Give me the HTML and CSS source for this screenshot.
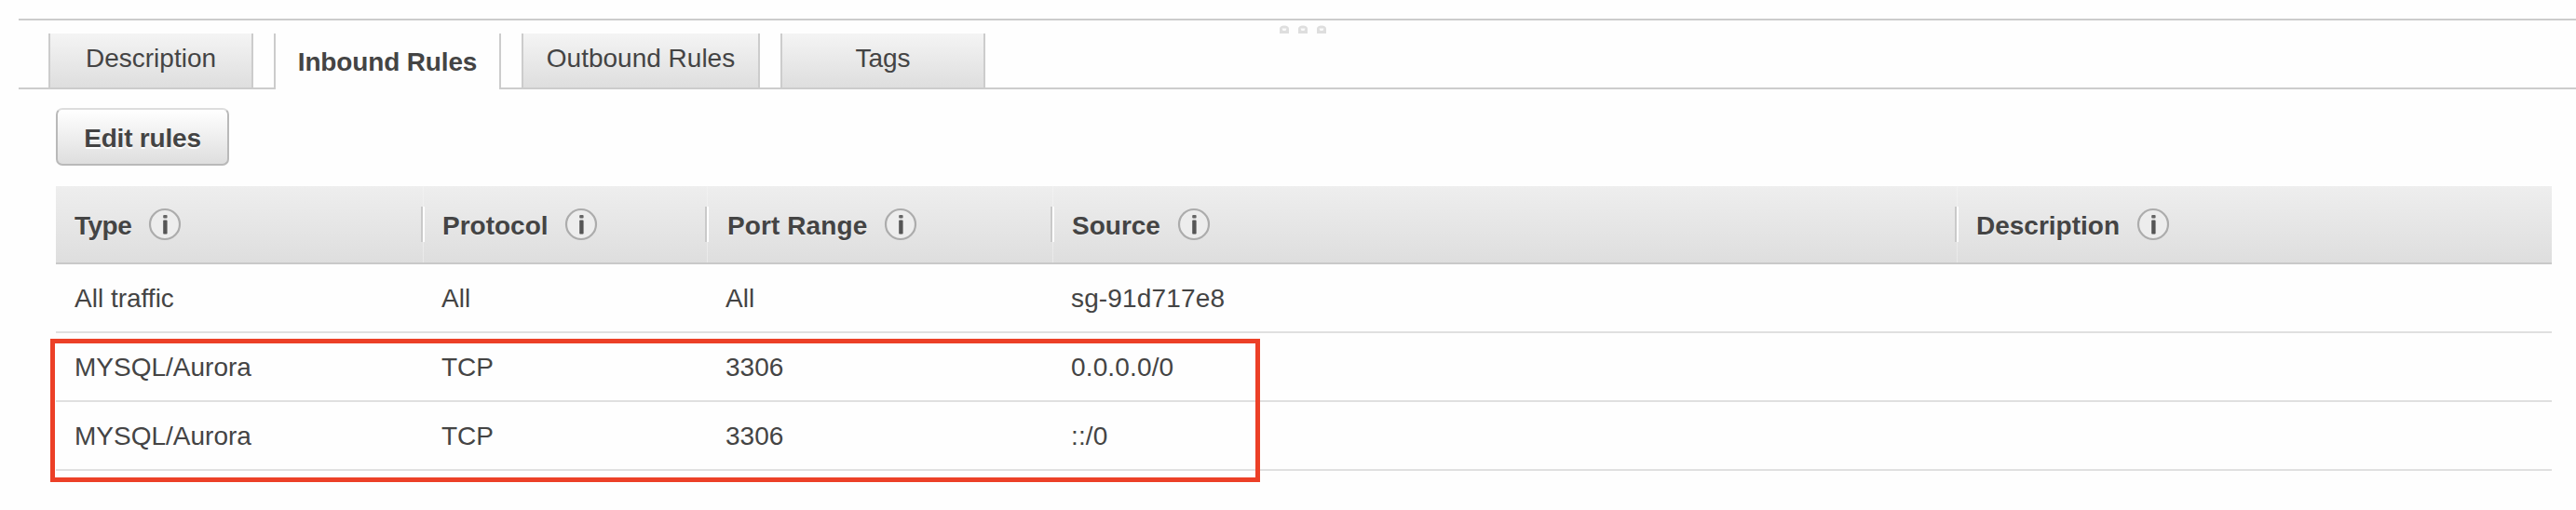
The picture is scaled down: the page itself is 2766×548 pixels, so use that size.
FILE: index.html
```html
<!DOCTYPE html>
<html lang="en">
<head>
<meta charset="utf-8">
<title>Security group rules</title>
<link rel="stylesheet" href="styles.css">
</head>
<body>
<svg class="defs" width="0" height="0" aria-hidden="true">
  <symbol id="info" viewBox="0 0 36 36">
    <circle cx="18" cy="18" r="16" fill="#ededed" stroke="#acacac" stroke-width="2.2"/>
    <rect x="16.2" y="8" width="4.4" height="3.4" rx="1" fill="#666"/>
    <rect x="16.2" y="13.6" width="4.4" height="15" rx="0.8" fill="#555"/>
  </symbol>
  <symbol id="grip" viewBox="0 0 10 9">
    <path d="M0 9V4Q0 0.5 5 0.5T10 4V9Z" fill="#dedede"/>
    <path d="M2.5 3.5H7.5L6.5 6H3.5Z" fill="#fafafa"/>
  </symbol>
</svg>
<main class="panel">
  <div class="splitter">
    <svg class="grip"><use href="#grip"/></svg>
    <svg class="grip"><use href="#grip"/></svg>
    <svg class="grip"><use href="#grip"/></svg>
  </div>
  <nav class="tabs">
    <a class="tab tab-description">Description</a>
    <a class="tab tab-inbound active">Inbound Rules</a>
    <a class="tab tab-outbound">Outbound Rules</a>
    <a class="tab tab-tags">Tags</a>
  </nav>
  <section class="content">
    <button class="edit">Edit rules</button>
    <div class="table">
      <div class="row head">
        <div class="cell type">Type<svg class="info"><use href="#info"/></svg></div>
        <div class="cell protocol">Protocol<svg class="info"><use href="#info"/></svg></div>
        <div class="cell port">Port Range<svg class="info"><use href="#info"/></svg></div>
        <div class="cell">Source<svg class="info"><use href="#info"/></svg></div>
        <div class="cell">Description<svg class="info"><use href="#info"/></svg></div>
      </div>
      <div class="row"><div class="cell">All traffic</div><div class="cell">All</div><div class="cell">All</div><div class="cell source">sg-91d717e8</div><div class="cell"></div></div>
      <div class="row"><div class="cell">MYSQL/Aurora</div><div class="cell">TCP</div><div class="cell">3306</div><div class="cell source">0.0.0.0/0</div><div class="cell"></div></div>
      <div class="row"><div class="cell">MYSQL/Aurora</div><div class="cell">TCP</div><div class="cell">3306</div><div class="cell source">::/0</div><div class="cell"></div></div>
      <div class="highlight"></div>
    </div>
  </section>
</main>
</body>
</html>
```
FILE: styles.css
```css
* { box-sizing: border-box; }
body {
  margin: 0;
  background: #fefefe;
  color: #444;
  font: 28px/32px "Liberation Sans", Arial, sans-serif;
}
.defs { position: absolute; }
.panel { min-height: 548px; padding: 20px 0 0 20px; }
.splitter {
  display: flex;
  gap: 10px;
  height: 16px;
  padding: 5px 0 0 1354px;
  border-top: 2px solid #ccc;
}
.grip { width: 10px; height: 9px; }
.tabs {
  display: flex;
  height: 60px;
  padding-left: 32px;
  gap: 22px;
  background: linear-gradient(#ccc, #ccc) 0 58px / 100% 2px no-repeat;
}
.tab {
  height: 58px;
  padding-top: 11px;
  border: solid #ccc;
  border-width: 0 2px;
  background: linear-gradient(#f4f4f4, #dedede);
  text-align: center;
  white-space: nowrap;
}
.tab-description { width: 220px; }
.tab-inbound { width: 244px; }
.tab-outbound { width: 256px; }
.tab-tags { width: 220px; }
.tab.active {
  height: 60px;
  padding-top: 15px;
  background: #fefefe;
  font-weight: bold;
  letter-spacing: -0.15px;
}
.content { padding: 20px 26px 0 40px; }
.edit {
  display: block;
  width: 186px;
  height: 62px;
  padding: 3px 0 0;
  border: 2px solid #b9b9b9;
  border-top-color: #ddd;
  border-radius: 7px;
  background: linear-gradient(#fff, #dedede);
  color: #444;
  font: bold 28px/32px "Liberation Sans", Arial, sans-serif;
  letter-spacing: -0.2px;
  text-shadow: 0 2px 1px #fff;
}
.table { position: relative; margin-top: 22px; }
.row {
  display: grid;
  grid-template-columns: 394px 305px 371px 971px 1fr;
  height: 74px;
  border-bottom: 2px solid #e0e0e0;
}
.cell {
  display: flex;
  align-items: center;
  padding: 1px 0 0 20px;
  white-space: nowrap;
}
.source { letter-spacing: 0.15px; }
.row.head {
  height: 84px;
  border-bottom-color: #c9c9c9;
  background: linear-gradient(#eee, #dedede);
  font-weight: bold;
}
.head .cell { position: relative; padding: 3px 0 0 20px; text-shadow: 0 1px 0 #f0f0f0; }
.head .cell + .cell {
  padding-left: 21px;
  background: linear-gradient(#f2f2f2, #e9e9e9) 0 0 / 1px 100% no-repeat;
}
.head .cell + .cell::before {
  content: "";
  position: absolute;
  left: -2px;
  top: 22px;
  width: 4px;
  height: 38px;
  background: linear-gradient(90deg, #c9c9c9 50%, #fff 50%);
}
.info { width: 36px; height: 36px; margin: 0 0 4px 18px; }
.type { letter-spacing: -0.5px; }
.protocol .info { margin-left: 17px; }
.head .cell + .port { padding-left: 22px; letter-spacing: 0.1px; }
.highlight {
  position: absolute;
  left: -6px;
  top: 164px;
  width: 1299px;
  height: 154px;
  border: 5px solid #ec4027;
}
```
